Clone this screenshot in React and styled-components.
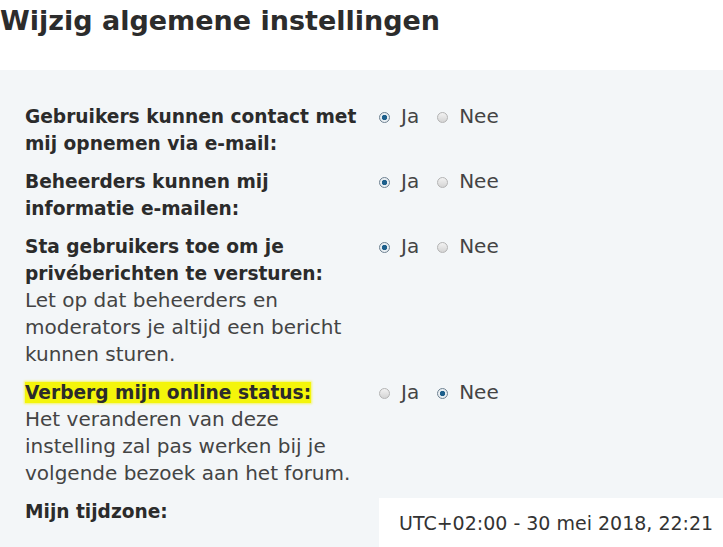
import React from 'react'
import styled, { createGlobalStyle } from 'styled-components'

const Global = createGlobalStyle`
  html, body {
    margin: 0;
    padding: 0;
    background: #fff;
    overflow: hidden;
  }
  body {
    font-family: "DejaVu Sans", Lato, sans-serif;
    color: #333;
  }
`

const Page = styled.div`
  width: 723px;
  height: 547px;
  overflow: hidden;
`

const Title = styled.h2`
  margin: 0;
  padding: 1px 0 0 0;
  height: 70px;
  box-sizing: border-box;
  font-size: 27px;
  font-weight: 700;
  color: #2c2c2c;
  line-height: 40px;
`

const Panel = styled.div`
  background: #f3f6f8;
  padding: 33px 0 0 25px;
  min-height: 500px;
`

const Row = styled.div`
  display: grid;
  grid-template-columns: 353px 1fr;
  margin-bottom: 11px;
  font-size: 20px;
  line-height: 27px;
`

const Label = styled.div`
  padding-right: 8px;
`

const LabelTitle = styled.span`
  font-size: 18.6px;
  font-weight: 700;
  color: #2b2b2b;
  background: ${p => (p.$mark ? '#f4f50a' : 'transparent')};
  box-shadow: ${p => (p.$mark ? '0 0 2px 1px #f4f56a' : 'none')};
`

const Explain = styled.div`
  color: #444;
  font-weight: 400;
`

const Options = styled.div`
  display: flex;
  align-items: flex-start;
  height: 27px;
  padding-left: 1px;
`

const Choice = styled.label`
  display: flex;
  align-items: center;
  color: #444;
  margin-right: 18px;
`

const Radio = styled.span`
  width: 11px;
  height: 11px;
  border-radius: 50%;
  box-sizing: border-box;
  margin: 2px 11px 0 0;
  border: 1px solid ${p => (p.$on ? '#6f8292' : '#b4b4b4')};
  background: ${p =>
    p.$on
      ? 'radial-gradient(circle, #1d5f8c 0, #1d5f8c 2.4px, #e8eef2 3px)'
      : 'linear-gradient(#f2f2f2, #d4d4d4)'};
`

const Select = styled.div`
  background: #fff;
  margin: 0 0 0 1px;
  height: 60px;
  padding: 12px 0 0 20px;
  box-sizing: border-box;
  color: #333;
  font-size: 19px;
  line-height: 27px;
  white-space: nowrap;
`

function YesNo({ yes }) {
  return (
    <Options>
      <Choice>
        <Radio $on={yes} />
        Ja
      </Choice>
      <Choice>
        <Radio $on={!yes} />
        Nee
      </Choice>
    </Options>
  )
}

const settings = [
  { title: 'Gebruikers kunnen contact met mij opnemen via e-mail:', yes: true },
  { title: 'Beheerders kunnen mij informatie e-mailen:', yes: true },
  {
    title: 'Sta gebruikers toe om je privéberichten te versturen:',
    explain: 'Let op dat beheerders en moderators je altijd een bericht kunnen sturen.',
    yes: true,
  },
  {
    title: 'Verberg mijn online status:',
    explain: 'Het veranderen van deze instelling zal pas werken bij je volgende bezoek aan het forum.',
    yes: false,
    mark: true,
  },
]

export default function App() {
  return (
    <Page>
      <Global />
      <Title>Wijzig algemene instellingen</Title>
      <Panel>
        {settings.map(s => (
          <Row key={s.title}>
            <Label>
              <LabelTitle $mark={s.mark}>{s.title}</LabelTitle>
              {s.explain && <Explain>{s.explain}</Explain>}
            </Label>
            <YesNo yes={s.yes} />
          </Row>
        ))}
        <Row>
          <Label>
            <LabelTitle>Mijn tijdzone:</LabelTitle>
          </Label>
          <Select>UTC+02:00 - 30 mei 2018, 22:21</Select>
        </Row>
      </Panel>
    </Page>
  )
}
